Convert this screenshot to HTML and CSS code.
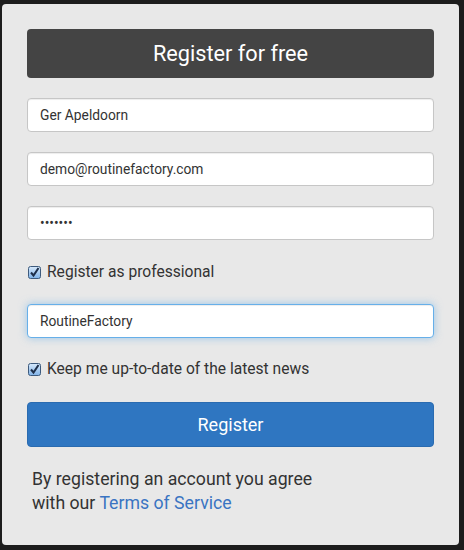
FILE: index.html
```html
<!DOCTYPE html>
<html lang="en">
<head>
<meta charset="utf-8">
<title>Register</title>
<link rel="stylesheet" href="styles.css">
</head>
<body>
<div class="panel">
  <h1 class="title">Register for free</h1>
  <form class="form">
    <input class="field" type="text" value="Ger Apeldoorn">
    <input class="field" type="email" value="demo@routinefactory.com">
    <input class="field" type="password" value="1234567">
    <label class="check">
      <span class="box"><svg width="13" height="13" viewBox="0 0 13 13"><defs><linearGradient id="g1" x1="0" y1="0" x2="0" y2="1"><stop offset="0" stop-color="#d7e9fb"/><stop offset="1" stop-color="#7fb2e8"/></linearGradient></defs><rect x="0.5" y="0.5" width="12" height="12" rx="2" fill="url(#g1)" stroke="#3d5a7d"/><path d="M3 6.5 L5.5 9.5 L10.5 2" fill="none" stroke="#1e2f4a" stroke-width="2"/></svg></span>
      <span>Register as professional</span>
    </label>
    <input class="field focus" type="text" value="RoutineFactory">
    <label class="check">
      <span class="box"><svg width="13" height="13" viewBox="0 0 13 13"><defs><linearGradient id="g2" x1="0" y1="0" x2="0" y2="1"><stop offset="0" stop-color="#d7e9fb"/><stop offset="1" stop-color="#7fb2e8"/></linearGradient></defs><rect x="0.5" y="0.5" width="12" height="12" rx="2" fill="url(#g2)" stroke="#3d5a7d"/><path d="M3 6.5 L5.5 9.5 L10.5 2" fill="none" stroke="#1e2f4a" stroke-width="2"/></svg></span>
      <span>Keep me up-to-date of the latest news</span>
    </label>
    <button class="btn" type="button">Register</button>
  </form>
  <p class="terms">By registering an account you agree<br>with our <a href="#">Terms of Service</a></p>
</div>
</body>
</html>
```
FILE: styles.css
```css
html, body {
  margin: 0;
  padding: 0;
  background: #1c1c1c;
}
body {
  font-family: Roboto, "Liberation Sans", sans-serif;
  color: #333;
  padding: 4px 0 0 2px;
}
.panel {
  box-sizing: border-box;
  width: 457px;
  height: 541px;
  background: #e8e8e8;
  border-radius: 4px;
  padding: 25px;
}
.title {
  margin: 0 0 20px;
  height: 49px;
  background: #444;
  color: #fff;
  border-radius: 4px;
  font-weight: 400;
  font-size: 21.7px;
  line-height: 49px;
  text-align: center;
}
.form {
  display: flex;
  flex-direction: column;
  margin: 0;
}
.field {
  box-sizing: border-box;
  height: 34px;
  width: 100%;
  margin: 0 0 20px;
  padding: 0 12px;
  border: 1px solid #c6c6c6;
  border-radius: 4px;
  background: #fff;
  font-family: Roboto, "Liberation Sans", sans-serif;
  font-size: 13.8px;
  color: #333;
  box-shadow: inset 0 1px 1px rgba(0,0,0,.075);
  outline: none;
}
.field.focus {
  border-color: #66afe9;
  box-shadow: inset 0 1px 1px rgba(0,0,0,.075), 0 0 8px rgba(102,175,233,.6);
  margin-bottom: 0;
}
.check {
  display: flex;
  align-items: center;
  gap: 6px;
  height: 20px;
  margin: 2px 0 22px 1px;
  font-size: 15.6px;
  line-height: 20px;
  color: #333;
}
.field.focus + .check {
  margin-top: 21px;
  margin-bottom: 23px;
}
.box {
  display: flex;
  width: 13px;
  height: 13px;
}
.btn {
  height: 45px;
  width: 100%;
  border: 1px solid #2a6bb0;
  border-radius: 4px;
  background: #2f76c1;
  color: #fff;
  font-family: Roboto, "Liberation Sans", sans-serif;
  font-size: 18px;
  padding: 0;
}
.terms {
  margin: 20px 0 0;
  padding-left: 5px;
  font-size: 17.7px;
  line-height: 24px;
  color: #333;
}
.terms a {
  color: #3a74c2;
  text-decoration: none;
}
```
